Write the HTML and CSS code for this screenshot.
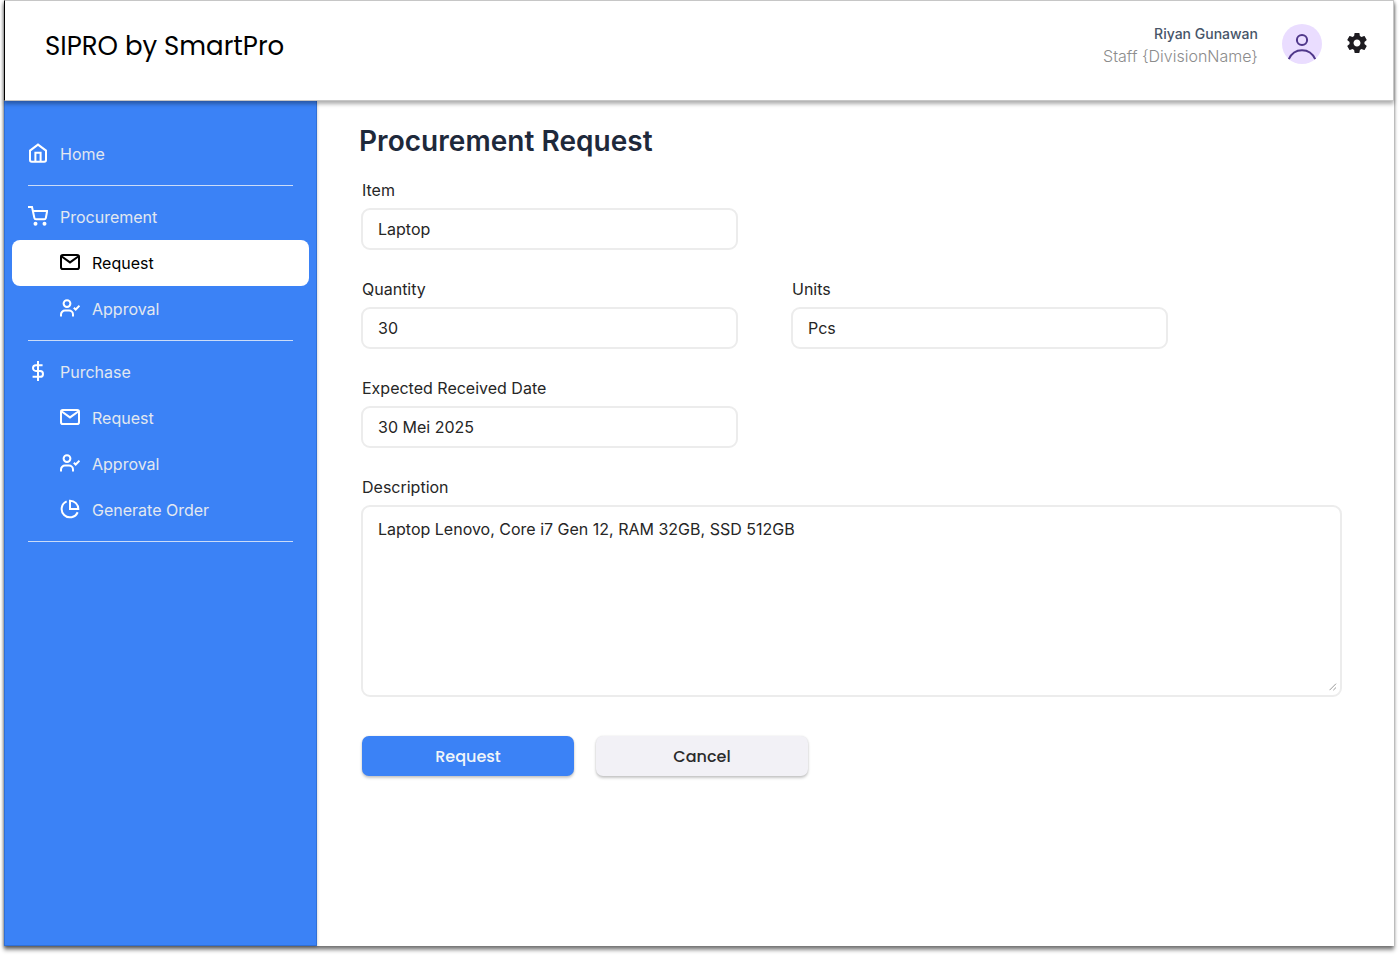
FILE: index.html
```html
<!DOCTYPE html>
<html lang="en">
<head>
<meta charset="utf-8">
<title>SIPRO by SmartPro</title>
<link rel="stylesheet" href="styles.css">
</head>
<body>
<svg class="sprite" aria-hidden="true">
  <symbol id="mail" viewBox="0 0 20 20"><rect x="1" y="3" width="18" height="14" rx="1.8"/><path d="M1.4 4.2 10 10.4l8.6-6.2"/></symbol>
  <symbol id="approve" viewBox="0 0 20 20"><circle cx="7" cy="5.6" r="3.4"/><path d="M1 18.6v-2.1a4 4 0 0 1 4-4h4a4 4 0 0 1 4 4v2.1M13.8 9.7l1.9 1.8 3.8-3.8"/></symbol>
</svg>
<div class="frame">
  <header class="header">
    <div class="brand"><span class="brand-text">SIPRO by SmartPro</span></div>
    <div class="account">
      <div class="person"><span class="name">Riyan Gunawan</span><span class="role">Staff {DivisionName}</span></div>
      <svg class="avatar" viewBox="0 0 40 40"><circle cx="20" cy="20" r="20" fill="#eaddff"/><g fill="none" stroke="#4f378a" stroke-width="2"><circle cx="20" cy="16" r="5.1"/><path d="M6.800 35.200C9.300 29.600 14 26.200 20 26.200s10.700 3.400 13.200 9"/></g></svg>
      <svg class="gear" viewBox="0 0 24 24"><path d="M19.43 12.98c.04-.32.07-.64.07-.98s-.03-.66-.07-.98l2.11-1.65c.19-.15.24-.42.12-.64l-2-3.460c-.12-.22-.39-.3-.61-.22l-2.490 1c-.52-.4-1.080-.73-1.690-.98l-.38-2.650C14.460 2.180 14.250 2 14 2h-4c-.25 0-.46.18-.49.42l-.38 2.650c-.61.25-1.170.59-1.690.98l-2.490-1c-.23-.09-.49 0-.61.22l-2 3.460c-.13.22-.07.49.12.64l2.110 1.650c-.04.32-.07.65-.07.98s.03.66.07.98l-2.110 1.650c-.19.15-.24.42-.12.64l2 3.460c.12.22.39.3.61.22l2.490-1c.52.4 1.080.73 1.690.98l.38 2.650c.03.24.24.42.49.42h4c.25 0 .46-.18.49-.42l.38-2.650c.61-.25 1.170-.59 1.690-.98l2.490 1c.23.09.49 0 .61-.22l2-3.460c.12-.22.07-.49-.12-.64l-2.110-1.650zM12 15.500c-1.930 0-3.500-1.570-3.500-3.500s1.570-3.500 3.500-3.500 3.500 1.570 3.500 3.500-1.570 3.500-3.500 3.500z"/></svg>
    </div>
  </header>
  <div class="body">
    <nav class="sidebar">
      <a class="nav"><svg class="icon" viewBox="0 0 20 20"><path d="M2 7.600 10 1.600l8 6v9.400a1.800 1.800 0 0 1-1.800 1.800H3.800A1.800 1.800 0 0 1 2 17zM7.400 18.800v-9h5.200v9"/></svg>Home</a>
      <div class="rule"></div>
      <a class="nav"><svg class="icon wide" viewBox="0 0 24 24"><circle cx="9" cy="21.300" r="1.200"/><circle cx="19.800" cy="21.300" r="1.200"/><path d="M0 1.200h4.800l2.880 13.190a2 2 0 0 0 2 1.610h9.720a2 2 0 0 0 2-1.610L23 6H6"/></svg>Procurement</a>
      <a class="nav sub active"><svg class="icon"><use href="#mail"/></svg>Request</a>
      <a class="nav sub"><svg class="icon"><use href="#approve"/></svg>Approval</a>
      <div class="rule"></div>
      <a class="nav"><svg class="icon wide" viewBox="0 0 24 24"><path d="M12 0v24M17.500 5H9.500a3.500 3.500 0 0 0 0 7h5a3.500 3.500 0 0 1 0 7H5.500"/></svg>Purchase</a>
      <a class="nav sub"><svg class="icon"><use href="#mail"/></svg>Request</a>
      <a class="nav sub"><svg class="icon"><use href="#approve"/></svg>Approval</a>
      <a class="nav sub"><svg class="icon wide" viewBox="0 0 24 24"><path d="M21.210 15.890A10 10 0 1 1 8 2.830M22 12A10 10 0 0 0 12 2v10z"/></svg>Generate Order</a>
      <div class="rule"></div>
    </nav>
    <main class="main">
      <h1 class="title"><span>Procurement Request</span></h1>
      <form class="form">
        <label class="field"><span class="label">Item</span><span class="box">Laptop</span></label>
        <div class="pair">
          <label class="field"><span class="label">Quantity</span><span class="box">30</span></label>
          <label class="field"><span class="label">Units</span><span class="box">Pcs</span></label>
        </div>
        <label class="field"><span class="label">Expected Received Date</span><span class="box">30 Mei 2025</span></label>
        <label class="field full"><span class="label">Description</span><span class="box area">Laptop Lenovo, Core i7 Gen 12, RAM 32GB, SSD 512GB<svg class="grip" viewBox="0 0 8 8"><path d="M.5 7.200 7 .7M4.300 7.200 7 4.500"/></svg></span></label>
        <div class="actions">
          <button type="button" class="btn primary">Request</button>
          <button type="button" class="btn">Cancel</button>
        </div>
      </form>
    </main>
  </div>
</div>
</body>
</html>
```
FILE: styles.css
```css
* { box-sizing: border-box; }
body { margin: 0; height: 956px; overflow: hidden; background: #fff; font: 16px/24px Inter, sans-serif; color: #262626; }
.sprite { display: none; }
.frame { width: 1390px; height: 946px; margin-left: 4px; display: flex; flex-direction: column; background: #fff; box-shadow: 0 4px 4px rgba(0,0,0,.45), 0 1px 3px rgba(0,0,0,.25); }
.header { position: relative; height: 101px; display: flex; justify-content: space-between; align-items: flex-start; padding: 23px 24px 0 40px; background: #fff; border: 1px solid #c6c6c6; border-left-color: #000; box-shadow: 0 3px 4px rgba(0,0,0,.32); }
.brand { font-family: Poppins, Inter, sans-serif; font-size: 26px; line-height: 45px; color: #000; white-space: nowrap; }
.account { display: flex; align-items: flex-start; }
.person { display: flex; flex-direction: column; align-items: flex-end; margin-right: 24px; white-space: nowrap; }
.name { font-size: 14px; line-height: 20px; font-weight: 500; color: #475569; }
.role { font-size: 16px; line-height: 24px; font-weight: 300; color: #8c8c8c; }
.avatar { width: 40px; height: 40px; margin-right: 23px; }
.gear { width: 24px; height: 24px; margin-top: 7px; fill: #1d1b20; }
.body { flex: 1; display: flex; }
.sidebar { width: 313px; padding: 30px 8px 0; background: #3b82f6; border: 1px solid #2f6fd6; border-top: 0; box-shadow: 0 1px 3px rgba(0,0,0,.25); }
.nav { display: flex; align-items: center; gap: 12px; height: 46px; margin: 0 -1px; padding-left: 16px; border-radius: 8px; color: #e2e8f0; white-space: nowrap; }
.sub { padding-left: 48px; }
.active { background: #fff; color: #000; }
.icon { width: 20px; height: 20px; margin-top: -2px; fill: none; stroke: #fff; stroke-width: 2; }
.active .icon { stroke: #000; }
.wide { stroke-width: 2.4; }
.rule { height: 1px; margin: 8px 15px; background: #cbdcf8; }
.main { flex: 1; padding: 20px 52px 0 44px; }
.title { margin: 0 0 17px -2px; font-size: 28px; line-height: 40px; font-weight: 600; color: #1e293b; letter-spacing: .04px; white-space: nowrap; }
.form { display: flex; flex-direction: column; gap: 27px; }
.pair { display: flex; gap: 53px; }
.field { width: 377px; display: flex; flex-direction: column; gap: 6px; }
.label { padding-left: 1px; }
.box { height: 42px; display: block; padding: 7px 15px; border: 2px solid #ececec; border-radius: 9px; line-height: 24px; white-space: nowrap; }
.full { width: 981px; }
.area { position: relative; height: 192px; padding-top: 10px; }
.grip { position: absolute; right: 3px; bottom: 4px; width: 8px; height: 8px; fill: none; stroke: #999; stroke-width: 1; }
.actions { display: flex; gap: 22px; padding: 12px 0 0 1px; }
.btn { width: 212px; height: 40px; padding: 1px 0 0; border: 0; border-radius: 7px; background: #f2f1f6; color: #2b2b2b; font: 500 16px/39px Poppins, Inter, sans-serif; box-shadow: 0 2px 3px rgba(0,0,0,.22), 0 0 2px rgba(0,0,0,.1); }
.primary { background: #3b82f6; color: #f1f5f9; }
```
